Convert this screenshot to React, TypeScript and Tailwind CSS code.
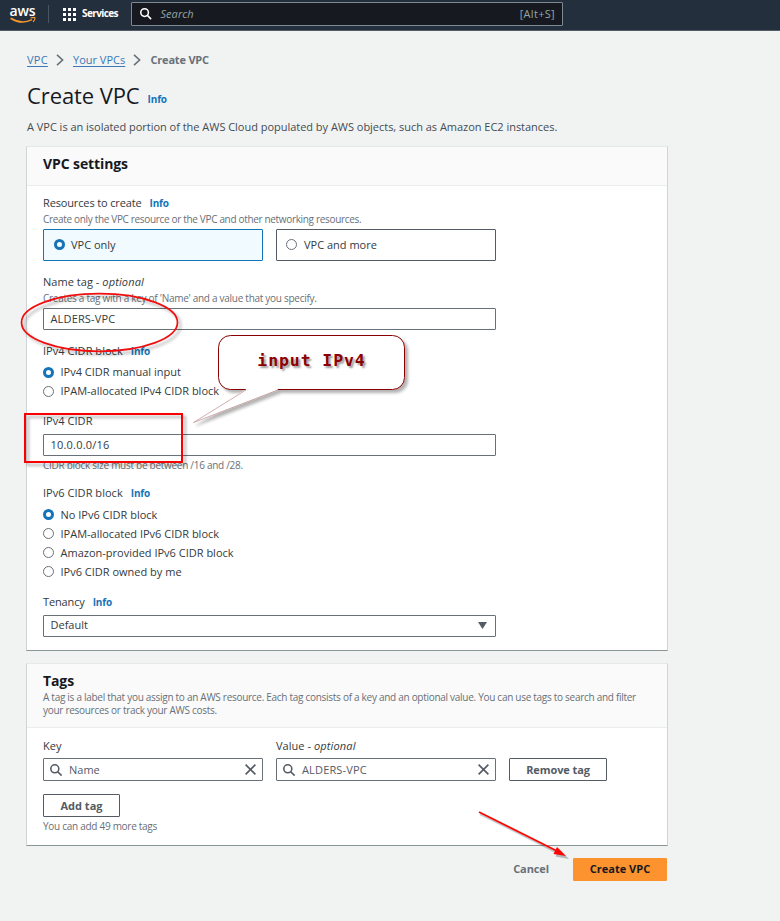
import type { ReactNode } from 'react';

const hintClass = 'text-[10px] text-[#687078]';

function Info() {
  return <span className="text-[10px] font-bold tracking-[-0.15px] text-[#1474b8]">Info</span>;
}

function Label({ children, info, tight }: { children: ReactNode; info?: boolean; tight?: boolean }) {
  return (
    <div className="flex h-4 items-center gap-2">
      <span className={tight ? 'whitespace-pre tracking-[-0.14px]' : 'whitespace-pre tracking-[0.04px]'}>{children}</span>
      {info && <Info />}
    </div>
  );
}

function Hint({ children, tight }: { children: ReactNode; tight?: boolean }) {
  return (
    <div className={`flex h-[15px] items-center ${hintClass} ${tight ? 'tracking-[-0.33px]' : 'tracking-[-0.28px]'}`}>{children}</div>
  );
}

function Dot({ on }: { on?: boolean }) {
  return on ? (
    <span className="size-[11px] shrink-0 rounded-full border-[3.5px] border-[#1474b8] bg-white" />
  ) : (
    <span className="size-[11px] shrink-0 rounded-full border border-[#687078] bg-white" />
  );
}

function Radio({ on, children }: { on?: boolean; children: ReactNode }) {
  return (
    <label className="flex h-[19.1px] items-center gap-[6.5px]">
      <Dot on={on} />
      <span>{children}</span>
    </label>
  );
}

function Tile({ on, children }: { on?: boolean; children: ReactNode }) {
  return (
    <div
      className={
        on
          ? 'flex h-8 w-[220px] items-center gap-[6px] rounded-[1px] border border-[#1474b8] bg-[#f1faff] pb-px pl-[10px]'
          : 'flex h-8 w-[220px] items-center gap-[7px] rounded-[1px] border border-[#545b64] bg-white pb-px pl-[9px]'
      }
    >
      <Dot on={on} />
      <span>{children}</span>
    </div>
  );
}

function Field({ children }: { children: ReactNode }) {
  return (
    <div className="flex h-[22px] w-[453px] items-center rounded-[1px] border border-[#687078] bg-white pl-[6.5px]">{children}</div>
  );
}

function SearchIcon({ className }: { className: string }) {
  return (
    <svg viewBox="0 0 12 12" className={className} fill="none" stroke="currentColor" strokeWidth="1.6">
      <circle cx="4.8" cy="4.8" r="4" />
      <path d="M7.7 7.7 11.6 11.6" />
    </svg>
  );
}

function SearchField({ children }: { children: ReactNode }) {
  return (
    <div className="flex h-[23px] w-[220px] items-center rounded-[1px] border border-[#687078] bg-white pl-[6px] pr-[6px] text-[#545b64]">
      <SearchIcon className="size-3" />
      <span className="ml-[7px] flex-1 pt-px text-[#545b64]">{children}</span>
      <svg viewBox="0 0 11 11" className="size-[11px]" fill="none" stroke="currentColor" strokeWidth="1.6">
        <path d="M.6.6 10.4 10.4M10.4.6.6 10.4" />
      </svg>
    </div>
  );
}

function Chevron() {
  return (
    <svg viewBox="0 0 8 12" className="h-3 w-2" fill="none" stroke="#687078" strokeWidth="1.6">
      <path d="M1 .8 6.6 6 1 11.2" />
    </svg>
  );
}

const card =
  'w-[642px] border border-l-[#cfd5d5] border-r-[#cfd5d5] border-t-[#e6e9e9] border-b-[#879596] bg-white';

export default function App() {
  return (
    <div className="relative h-[921px] w-[780px] overflow-hidden bg-[#f1f3f3] font-['Open_Sans',sans-serif] text-[11px] leading-[14px] text-[#333a40]">
      <header className="flex h-[31px] border-b border-[#525b66] bg-[#242f3d] text-white">
        <div className="ml-[9px] mt-[5px] flex w-[27px] flex-col items-center">
          <span className="h-[12px] text-[14px] font-semibold leading-[11px] tracking-[-0.1px]">aws</span>
          <svg viewBox="0 0 26 7" className="h-[7px] w-[26px]" fill="none" stroke="#f7962c">
            <path d="M.6 1.2Q11.5 8 22 2.6" strokeWidth="1.6" />
            <path d="M20.6.9Q24.8-.1 25 .9T23.2 5" strokeWidth="1.2" />
          </svg>
        </div>
        <div className="ml-3 mt-[5px] h-[18px] w-px bg-[#4b5561]" />
        <div className="ml-[14px] mt-2 grid size-[13px] grid-cols-3 gap-[2px]">
          {Array.from({ length: 9 }, (_, i) => (
            <span key={i} className="bg-white" />
          ))}
        </div>
        <span className="ml-[6px] mt-[6px] w-[37px] text-[10px] font-bold tracking-[-0.6px]">Services</span>
        <div className="ml-3 mt-[2px] flex h-6 w-[432px] items-center rounded-[1px] border border-[#7e8a91] bg-[#16191f] pl-2 pr-[7px]">
          <SearchIcon className="size-[11.5px]" />
          <span className="ml-[9px] flex-1 italic tracking-[0.05px] text-[#95a5a6]">Search</span>
          <span className="tracking-[0.3px] text-[#95a5a6]">[Alt+S]</span>
        </div>
      </header>

      <main className="pl-[26px]">
        <nav className="mt-[22px] flex h-[14px] items-center pl-px text-[#3b78b5]">
          <span className="w-[29px] tracking-[0.25px]"><span className="underline underline-offset-2">VPC</span></span>
          <Chevron />
          <span className="ml-[9px] w-[60px]"><span className="underline underline-offset-2">Your VPCs</span></span>
          <Chevron />
          <span className="ml-[9.5px] font-bold tracking-[-0.2px] text-[#687078]">Create VPC</span>
        </nav>
        <div className="mt-[13px] flex h-[30px] items-baseline gap-2 pl-px">
          <h1 className="text-[22px] leading-[30px] tracking-[-0.1px] text-[#16191f]">Create VPC</h1>
          <span className="relative -top-px"><Info /></span>
        </div>
        <p className="mt-[10px] pl-px tracking-[-0.025px] text-[#444b52]">
          A VPC is an isolated portion of the AWS Cloud populated by AWS objects, such as Amazon EC2 instances.
        </p>

        <section className={`${card} mt-3 h-[505px]`}>
          <div className="h-[39px] border-b border-[#eaeded] bg-[#fafafa] pl-4 pt-[7px]">
            <h2 className="text-[14px] font-bold leading-5 tracking-[-0.1px] text-[#16191f]">VPC settings</h2>
          </div>
          <div className="pl-4 pt-[9px]">
            <Label info tight>Resources to create</Label>
            <Hint tight>Create only the VPC resource or the VPC and other networking resources.</Hint>
            <div className="mt-[3px] flex gap-[13px]">
              <Tile on>VPC only</Tile>
              <Tile>VPC and more</Tile>
            </div>

            <div className="mt-[13px]">
              <Label>Name tag - <i className="tracking-[0.15px]">optional</i></Label>
              <Hint>Creates a tag with a key of 'Name' and a value that you specify.</Hint>
              <div className="mt-[3px]"><Field><span className="tracking-[0.15px]">ALDERS-VPC</span></Field></div>
            </div>

            <div className="mt-[13px]">
              <Label info>IPv4 CIDR block</Label>
              <div className="mt-[3.5px]">
                <Radio on>IPv4 CIDR manual input</Radio>
                <Radio>IPAM-allocated IPv4 CIDR block</Radio>
              </div>
            </div>

            <div className="mt-[12.3px]">
              <Label>IPv4 CIDR</Label>
              <div className="mt-[5px]"><Field><span className="tracking-[0.2px]">10.0.0.0/16</span></Field></div>
              <div className="mt-[2px]"><Hint>CIDR block size must be between /16 and /28.</Hint></div>
            </div>

            <div className="mt-[12px]">
              <Label info>IPv6 CIDR block</Label>
              <div className="mt-[4px] h-[76px]">
                <Radio on>No IPv6 CIDR block</Radio>
                <Radio>IPAM-allocated IPv6 CIDR block</Radio>
                <Radio>Amazon-provided IPv6 CIDR block</Radio>
                <Radio>IPv6 CIDR owned by me</Radio>
              </div>
            </div>

            <div className="mt-[13px]">
              <Label info tight>Tenancy</Label>
              <div className="mt-[5px]">
                <Field>
                  <span className="flex-1 pb-0.5">Default</span>
                  <svg viewBox="0 0 9 7" className="mr-2 h-[7px] w-[9px]">
                    <path d="M0 0H9L4.5 7Z" fill="#545b64" />
                  </svg>
                </Field>
              </div>
            </div>
          </div>
        </section>

        <section className={`${card} mt-3 h-[183px]`}>
          <div className="h-[64px] border-b border-[#eaeded] bg-[#fafafa] pl-4 pt-[7px]">
            <h2 className="text-[14px] font-bold leading-5 tracking-[-0.1px] text-[#16191f]">Tags</h2>
            <p className={`w-[610px] leading-[13px] tracking-[-0.285px] ${hintClass}`}>
              A tag is a label that you assign to an AWS resource. Each tag consists of a key and an optional value. You can use tags to search and filter<br />
              your resources or track your AWS costs.
            </p>
          </div>
          <div className="pl-4 pt-[10px]">
            <div className="flex items-end gap-[13px]">
              <div>
                <Label>Key</Label>
                <div className="mt-1"><SearchField>Name</SearchField></div>
              </div>
              <div>
                <Label>Value - <i className="tracking-[0.15px]">optional</i></Label>
                <div className="mt-1"><SearchField><span className="tracking-[0.15px]">ALDERS-VPC</span></SearchField></div>
              </div>
              <button className="h-[23px] w-[98px] rounded-[1px] border border-[#545b64] pb-px font-bold leading-[19px] tracking-[-0.1px] text-[#545b64]">Remove tag</button>
            </div>
            <button className="mt-[13px] block h-[23px] w-[77px] rounded-[1px] border border-[#545b64] pb-px font-bold leading-[19px] text-[#545b64]">Add tag</button>
            <div className="mt-[1px]"><Hint>You can add 49 more tags</Hint></div>
          </div>
        </section>

        <div className="mt-3 flex h-[23px] w-[641px] items-center justify-end gap-6 font-bold">
          <span className="pb-0.5 tracking-[-0.1px] text-[#687078]">Cancel</span>
          <button className="h-[23px] w-[94px] rounded-[1px] bg-[#fd932f] pb-0.5 text-[#16191f]">Create VPC</button>
        </div>
      </main>

      {/* Hand-drawn annotations over the form */}
      <svg viewBox="0 0 780 921" className="pointer-events-none absolute inset-0 h-[921px] w-[780px]" fill="none">
        <defs>
          <filter id="shadow" filterUnits="userSpaceOnUse" x="0" y="0" width="780" height="921">
            <feDropShadow dx="3" dy="3" stdDeviation="1.5" floodColor="#000" floodOpacity="0.3" />
          </filter>
        </defs>
        <g filter="url(#shadow)">
          <ellipse cx="99.5" cy="322.5" rx="78" ry="28.8" stroke="#f01010" strokeWidth="1.7" />
          <rect x="25" y="414" width="157" height="48" stroke="#fa0404" strokeWidth="2" />
        </g>
        <g filter="url(#shadow)">
          <rect x="218.500" y="335.500" width="186" height="54" rx="12" fill="#fff" stroke="#8b0000" />
          <path d="M246 388.500V389.500L193.500 422.500 278 389.500V388.500Z" fill="#fff" />
          <path d="M246 390 193.500 422.500 278 390" stroke="#c49a9a" strokeWidth="0.8" />
        </g>
        <g>
          <path d="M479 812 556 850.500" stroke="#000" strokeOpacity="0.22" strokeWidth="2" transform="translate(1 2)" />
          <path d="M479 812 556 850.500" stroke="#fb0505" strokeWidth="1.6" />
          <path d="M567 857 553.500 854.500 557 847Z" fill="#000" fillOpacity="0.25" transform="translate(2 2)" />
          <path d="M566 856 553.500 854 557 847Z" fill="#fb0505" />
        </g>
      </svg>
      <div className="absolute left-[218px] top-[351px] w-[187px] text-center font-['DejaVu_Sans_Mono',monospace] text-[16.5px] font-bold leading-[20px] tracking-[0.9px] text-[#8b0000] [text-shadow:2px_2px_2px_rgba(0,0,0,0.4)]">
        input IPv4
      </div>
    </div>
  );
}
